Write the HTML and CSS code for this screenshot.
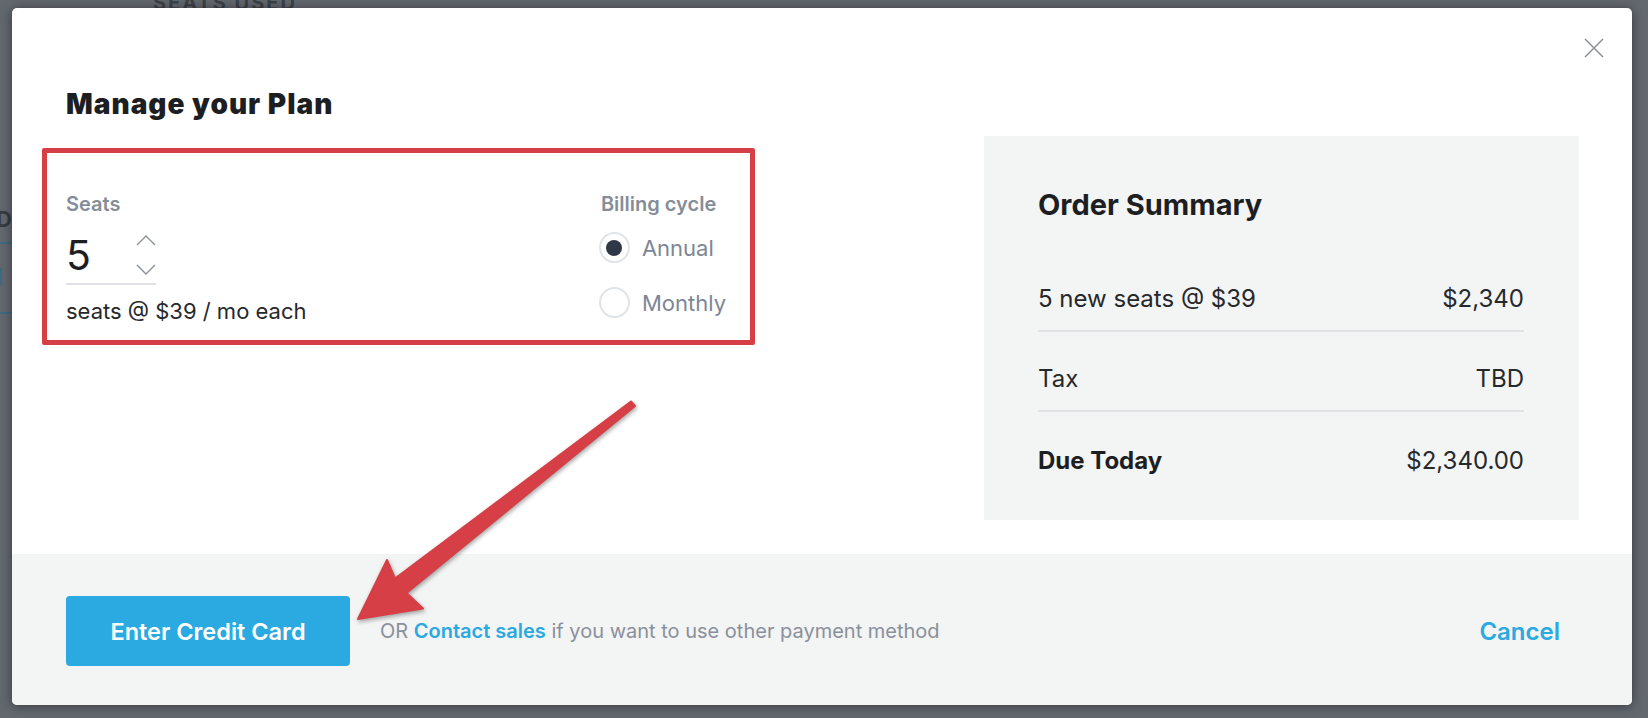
FILE: index.html
```html
<!DOCTYPE html>
<html lang="en">

<head>
    <meta charset="UTF-8">
    <title>Manage your Plan</title>
    <link rel="stylesheet" href="styles.css">
</head>

<body>

    <!-- page behind the dialog -->
    <div class="backdrop">
        <span class="bg-heading">SEATS USED</span>
        <span class="bg-letter">D</span>
        <span class="bg-line bg-line-top"></span>
        <span class="bg-mark"></span>
        <span class="bg-line bg-line-bottom"></span>
    </div>

    <div class="modal">
        <button class="close" type="button" aria-label="Close">
            <svg width="20" height="20" viewBox="0 0 20 20">
                <path d="M1 1 L19 19 M19 1 L1 19" stroke="#8a919c" stroke-width="1.5" fill="none" />
            </svg>
        </button>

        <div class="modal-body">
            <div class="plan">
                <h1>Manage your Plan</h1>

                <div class="plan-form">
                    <div class="seats">
                        <div class="field-label">Seats</div>
                        <div class="stepper">
                            <span class="count">5</span>
                            <div class="arrows">
                                <svg width="20" height="11" viewBox="0 0 20 11">
                                    <polyline points="1,10 10,1 19,10" stroke="#8a919c" stroke-width="1.4" fill="none" />
                                </svg>
                                <svg width="20" height="11" viewBox="0 0 20 11">
                                    <polyline points="1,1 10,10 19,1" stroke="#8a919c" stroke-width="1.4" fill="none" />
                                </svg>
                            </div>
                        </div>
                        <p class="price-note">seats @ $39 / mo each</p>
                    </div>

                    <div class="billing">
                        <div class="field-label">Billing cycle</div>
                        <label class="radio"><span class="radio-dot checked"></span>Annual</label>
                        <label class="radio"><span class="radio-dot"></span>Monthly</label>
                    </div>
                </div>
            </div>

            <div class="summary">
                <h2>Order Summary</h2>
                <div class="summary-row">
                    <span>5 new seats @ $39</span>
                    <span>$2,340</span>
                </div>
                <div class="summary-row">
                    <span>Tax</span>
                    <span>TBD</span>
                </div>
                <div class="summary-row total">
                    <span class="name">Due Today</span>
                    <span>$2,340.00</span>
                </div>
            </div>
        </div>

        <div class="modal-footer">
            <button class="btn-primary" type="button">Enter Credit Card</button>
            <p class="alt-note">OR <a href="#">Contact sales</a> if you want to use other payment method</p>
            <a class="cancel" href="#">Cancel</a>
        </div>
    </div>

    <!-- annotation arrow drawn over the dialog -->
    <svg class="callout" width="1648" height="718" viewBox="0 0 1648 718">
        <polygon points="358,619 387,560 395,578.5 631,401.5 635,406 406.5,593 423,608.5"
            fill="#d63f46" stroke="#d63f46" stroke-width="2" stroke-linejoin="round" />
    </svg>

</body>

</html>
```

FILE: styles.css
```css
* {
    box-sizing: border-box;
}

body {
    position: relative;
    margin: 0;
    height: 718px;
    overflow: hidden;
    padding: 8px 16px 0 12px;
    background-color: #63686f;
    font-family: Inter, "Liberation Sans", sans-serif;
    color: #26282c;
}

/* page behind the dialog */
.backdrop span {
    position: absolute;
}

.bg-heading {
    top: -7px;
    left: 153px;
    font-size: 20px;
    line-height: 20px;
    font-weight: 700;
    letter-spacing: 2px;
    color: #3d4148;
}

.bg-letter {
    top: 206px;
    left: -4px;
    font-size: 22px;
    font-weight: 700;
    color: #373b42;
}

.bg-line {
    left: 0;
    width: 12px;
    height: 2px;
    background-color: #3d6a80;
}

.bg-line-top {
    top: 242px;
}

.bg-line-bottom {
    top: 312px;
}

.bg-mark {
    top: 268px;
    left: 0;
    width: 2px;
    height: 17px;
    background-color: #3d6a80;
}

/* dialog */
.modal {
    position: relative;
    display: flex;
    flex-direction: column;
    height: 697px;
    background-color: #fff;
    border-radius: 5px;
    box-shadow: 0 1px 12px rgba(0, 0, 0, 0.45);
    overflow: hidden;
}

.close {
    position: absolute;
    top: 30px;
    right: 28px;
    width: 20px;
    height: 20px;
    padding: 0;
    border: none;
    background: none;
    cursor: pointer;
}

.close svg {
    display: block;
}

.modal-body {
    flex: 1;
    display: flex;
    justify-content: space-between;
    align-items: flex-start;
    padding: 80px 53px 0 54px;
}

h1 {
    margin: 0 0 28px;
    font-size: 28px;
    line-height: 32px;
    font-weight: 900;
    letter-spacing: 1px;
    color: #1d1e22;
}

.plan-form {
    display: flex;
    justify-content: space-between;
    width: 713px;
    margin-left: -24px;
    padding: 39px 24px 14px 19px;
    border: 5px solid #d63f46;
    border-radius: 2px;
}

.field-label {
    font-size: 20px;
    line-height: 24px;
    font-weight: 600;
    color: #858d99;
}

.stepper {
    display: flex;
    width: 90px;
    margin-top: 18px;
    padding-bottom: 7px;
    border-bottom: 2px solid #dfe1e5;
}

.count {
    font-size: 41px;
    line-height: 42px;
    font-weight: 400;
    color: #1d1e22;
}

.arrows {
    display: flex;
    flex-direction: column;
    gap: 18px;
    margin-left: auto;
    padding-top: 1px;
}

.arrows svg {
    display: block;
}

.price-note {
    margin: 11px 0 0;
    font-size: 22px;
    line-height: 30px;
    color: #26282c;
}

.billing .field-label {
    margin: 0 0 16px 2px;
}

.radio {
    display: flex;
    align-items: center;
    gap: 12px;
    height: 31px;
    font-size: 22px;
    color: #7d8694;
}

.radio + .radio {
    margin-top: 24px;
}

.radio-dot {
    display: flex;
    align-items: center;
    justify-content: center;
    width: 31px;
    height: 31px;
    border: 2px solid #e0e3e7;
    border-radius: 50%;
}

.radio-dot.checked::after {
    content: "";
    width: 16px;
    height: 16px;
    border-radius: 50%;
    background-color: #2e3846;
}

/* order summary */
.summary {
    width: 595px;
    margin-top: 48px;
    padding: 51px 55px 28px 54px;
    background-color: #f3f4f4;
}

.summary h2 {
    margin: 0 0 29px;
    font-size: 29px;
    line-height: 36px;
    font-weight: 700;
    color: #1d1e22;
}

.summary-row {
    display: flex;
    justify-content: space-between;
    padding: 32px 0 16px;
    font-size: 24px;
    line-height: 30px;
    border-bottom: 2px solid #e0e2e5;
}

.summary-row.total {
    padding-top: 34px;
    border-bottom: none;
}

.summary-row .name {
    font-weight: 700;
    color: #1d1e22;
}

/* footer */
.modal-footer {
    display: flex;
    align-items: center;
    padding: 42px 72px 39px 54px;
    background-color: #f3f4f4;
}

.btn-primary {
    width: 284px;
    height: 70px;
    border: none;
    border-radius: 4px;
    background-color: #2ba9e1;
    color: #fff;
    font-family: inherit;
    font-size: 23.5px;
    font-weight: 600;
    cursor: pointer;
}

.alt-note {
    margin: 0 0 0 30px;
    font-size: 20px;
    color: #8a909b;
}

.alt-note a {
    color: #2ba9e1;
    font-weight: 600;
    text-decoration: none;
}

.cancel {
    margin-left: auto;
    font-size: 24px;
    font-weight: 600;
    color: #2ba9e1;
    text-decoration: none;
}

.callout {
    position: absolute;
    top: 0;
    left: 0;
    pointer-events: none;
    filter: drop-shadow(1px 2px 2px rgba(0, 0, 0, 0.35));
}
```
